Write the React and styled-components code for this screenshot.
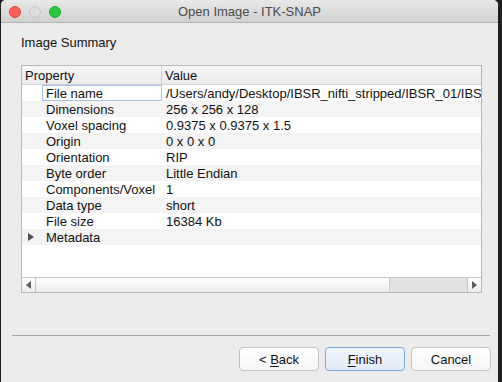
import React from "react";
import styled, { createGlobalStyle } from "styled-components";

const Global = createGlobalStyle`
  html, body { margin: 0; padding: 0; background: #1f1f1f; }
  body { width: 502px; height: 382px; overflow: hidden; font-family: "Liberation Sans", Arial, sans-serif; }
  * { box-sizing: border-box; }
`;

const Window = styled.div`
  margin-left: 1px;
  width: 497px;
  height: 382px;
  background: #ececec;
  border-radius: 5px 5px 0 0;
  overflow: hidden;
  display: flex;
  flex-direction: column;
`;

const TitleBar = styled.div`
  position: relative;
  height: 23px;
  flex: none;
  background: linear-gradient(#e9e8e9, #d2d1d2);
  border-bottom: 1px solid #b3b3b3;
  display: flex;
  align-items: center;
  justify-content: center;
`;

const Lights = styled.div`
  position: absolute;
  left: 8px;
  top: 6px;
  display: flex;
  gap: 8px;
`;

const Light = styled.span`
  width: 12px;
  height: 12px;
  border-radius: 50%;
  background: ${(p) => p.$fill};
  border: 1px solid ${(p) => p.$edge};
`;

const Title = styled.div`
  font-size: 13px;
  color: #4a4a4a;
  margin-top: 1px;
`;

const Content = styled.div`
  padding: 12px 16px 0 20px;
  display: flex;
  flex-direction: column;
`;

const Heading = styled.div`
  font-size: 13px;
  line-height: 16px;
  color: #111;
  height: 16px;
`;

const Table = styled.div`
  margin-top: 14px;
  height: 228px;
  border: 1px solid #b6b6b6;
  background: #fff;
  display: flex;
  flex-direction: column;
`;

const Viewport = styled.div`
  flex: 1;
  overflow: hidden;
  display: flex;
  flex-direction: column;
`;

const Header = styled.div`
  height: 19px;
  flex: none;
  display: flex;
  background: linear-gradient(#f6f6f6, #ebebeb);
  border-bottom: 1px solid #d0d0d0;
  font-size: 13px;
  color: #111;
`;

const HeadCell = styled.div`
  width: ${(p) => (p.$first ? "140px" : "auto")};
  flex: ${(p) => (p.$first ? "none" : "1")};
  padding: 1px 0 0 3px;
  line-height: 18px;
  border-right: ${(p) => (p.$first ? "1px solid #d0d0d0" : "none")};
`;

const Row = styled.div`
  height: 16px;
  flex: none;
  display: flex;
  background: ${(p) => (p.$alt ? "#f4f4f4" : "#ffffff")};
  font-size: 13px;
  line-height: 17px;
  color: #111;
  white-space: nowrap;
`;

const PropCell = styled.div`
  width: 140px;
  flex: none;
  padding-left: 20px;
  position: relative;
  display: flex;
`;

const PropText = styled.div`
  flex: 1;
  padding-left: 3px;
  border: 1px solid ${(p) => (p.$focus ? "#a9c5ee" : "transparent")};
  line-height: 15px;
`;

const Expander = styled.svg`
  position: absolute;
  left: 6px;
  top: 4px;
`;

const ValueCell = styled.div`
  flex: 1;
  padding-left: 4px;
  overflow: hidden;
`;

const HScroll = styled.div`
  height: 15px;
  flex: none;
  border-top: 1px solid #c4c4c4;
  display: flex;
  background: linear-gradient(#ffffff, #ececec);
`;

const ArrowBtn = styled.div`
  width: 14px;
  flex: none;
  display: flex;
  align-items: center;
  justify-content: center;
  border-${(p) => (p.$side === "left" ? "right" : "left")}: 1px solid #c4c4c4;
`;

const Track = styled.div`
  flex: 1;
  display: flex;
  justify-content: flex-end;
`;

const Thumb = styled.div`
  width: 78px;
  background: #e2e2e2;
  border-left: 1px solid #cfcfcf;
`;

const Separator = styled.div`
  margin: 42px 8px 0 11px;
  height: 1px;
  background: #a4a4a4;
  flex: none;
`;

const Buttons = styled.div`
  margin-top: 11px;
  padding-right: 7px;
  display: flex;
  justify-content: flex-end;
  gap: 6px;
`;

const Button = styled.button`
  width: 80px;
  height: 24px;
  border-radius: 4px;
  font-family: "Liberation Sans", Arial, sans-serif;
  font-size: 13px;
  color: #111;
  border: 1px solid ${(p) => (p.$default ? "#79a6e6" : "#c3c3c3")};
  background: ${(p) =>
    p.$default ? "linear-gradient(#f0f5fd, #e2ebf8)" : "linear-gradient(#ffffff, #f6f6f6)"};
  padding: 0;
  u { text-decoration: underline; text-underline-offset: 2px; }
`;

const rows = [
  ["File name", "/Users/andy/Desktop/IBSR_nifti_stripped/IBSR_01/IBSR_01_ana_strip.nii.gz"],
  ["Dimensions", "256 x 256 x 128"],
  ["Voxel spacing", "0.9375 x 0.9375 x 1.5"],
  ["Origin", "0 x 0 x 0"],
  ["Orientation", "RIP"],
  ["Byte order", "Little Endian"],
  ["Components/Voxel", "1"],
  ["Data type", "short"],
  ["File size", "16384 Kb"],
  ["Metadata", "", true],
];

export default function App() {
  return (
    <>
      <Global />
      <Window>
        <TitleBar>
          <Lights>
            <Light $fill="#fe5f57" $edge="#e0443e" />
            <Light $fill="#dcdcdc" $edge="#c6c6c6" />
            <Light $fill="#29c840" $edge="#1dac2c" />
          </Lights>
          <Title>Open Image - ITK-SNAP</Title>
        </TitleBar>
        <Content>
          <Heading>Image Summary</Heading>
          <Table>
            <Viewport>
              <Header>
                <HeadCell $first>Property</HeadCell>
                <HeadCell>Value</HeadCell>
              </Header>
              {rows.map(([k, v, exp], i) => (
                <Row key={k} $alt={i % 2 === 1}>
                  <PropCell>
                    {exp && (
                      <Expander width="6" height="8" viewBox="0 0 6 8">
                        <path d="M0 0 L6 4 L0 8 Z" fill="#505050" />
                      </Expander>
                    )}
                    <PropText $focus={i === 0}>{k}</PropText>
                  </PropCell>
                  <ValueCell>{v}</ValueCell>
                </Row>
              ))}
            </Viewport>
            <HScroll>
              <ArrowBtn $side="left">
                <svg width="5" height="8" viewBox="0 0 5 8">
                  <path d="M5 0 L0 4 L5 8 Z" fill="#5a5a5a" />
                </svg>
              </ArrowBtn>
              <Track>
                <Thumb />
              </Track>
              <ArrowBtn $side="right">
                <svg width="5" height="8" viewBox="0 0 5 8">
                  <path d="M0 0 L5 4 L0 8 Z" fill="#5a5a5a" />
                </svg>
              </ArrowBtn>
            </HScroll>
          </Table>
        </Content>
        <Separator />
        <Buttons>
          <Button>
            &lt; <u>B</u>ack
          </Button>
          <Button $default>
            <u>F</u>inish
          </Button>
          <Button>Cancel</Button>
        </Buttons>
      </Window>
    </>
  );
}
